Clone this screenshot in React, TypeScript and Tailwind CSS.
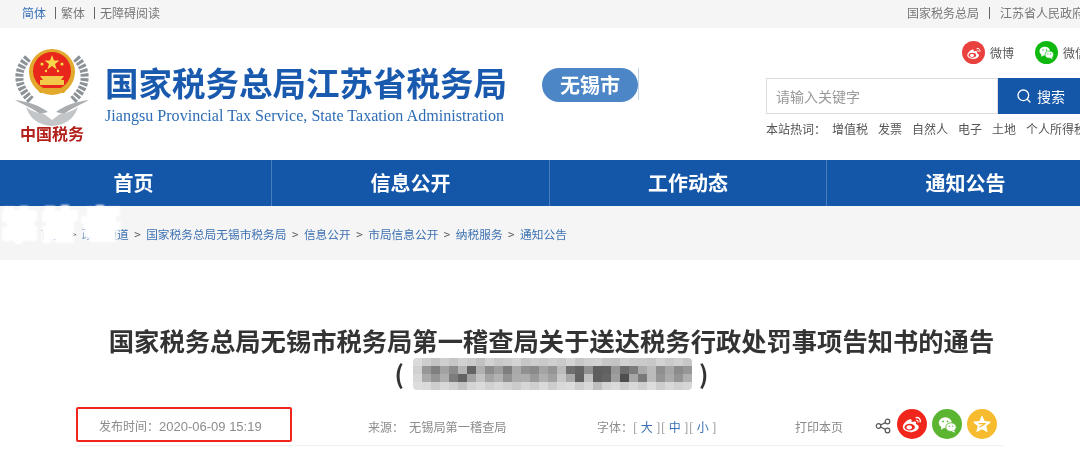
import React from 'react';
import { Search } from 'lucide-react';

const CJK = "font-['Noto_Sans_CJK_SC','Liberation_Sans',sans-serif]";

const NAV_ITEMS = ['首页', '信息公开', '工作动态', '通知公告'];
const CRUMBS = ['国家税务总局无锡市税务局', '信息公开', '市局信息公开', '纳税服务', '通知公告'];
const HOT_WORDS = ['增值税', '发票', '自然人', '电子', '土地', '个人所得税'];

// mosaic that covers the redacted part of the title
const MOSAIC = [
  ['#f2f2f2', '#e4e4e4', '#d9d9d9', '#e6e6e6', '#dcdcdc', '#e8e8e8', '#e2e2e2', '#d6d6d6', '#e9e9e9', '#dedede', '#e4e4e4', '#ececec', '#dcdcdc', '#e4e4e4', '#dfdfdf', '#e6e6e6', '#e0e0e0', '#ebebeb', '#dddddd', '#e5e5e5', '#e8e8e8', '#dcdcdc', '#d9d9d9', '#e8e8e8', '#e3e3e3', '#e0e0e0', '#dddddd', '#eaeaea', '#e0e0e0', '#e8e8e8', '#dddddd'],
  ['#e8e8e8', '#a8a8a8', '#8e8e8e', '#b4b4b4', '#9a9a9a', '#c8c8c8', '#6e6e6e', '#c4c4c4', '#9c9c9c', '#b0b0b0', '#8c8c8c', '#bcbcbc', '#a0a0a0', '#999999', '#b6b6b6', '#a6a6a6', '#d0d0d0', '#7a7a7a', '#6f6f6f', '#a0a0a0', '#686868', '#6c6c6c', '#a8a8a8', '#787878', '#8a8a8a', '#bcbcbc', '#d0d0d0', '#9e9e9e', '#b8b8b8', '#9a9a9a', '#a8a8a8'],
  ['#f0f0f0', '#bdbdbd', '#a6a6a6', '#c0c0c0', '#8a8a8a', '#6e6e6e', '#b4b4b4', '#d8d8d8', '#b6b6b6', '#c6c6c6', '#a2a2a2', '#bfbfbf', '#c0c0c0', '#aaaaaa', '#c4c4c4', '#b2b2b2', '#dedede', '#bcbcbc', '#6c6c6c', '#d6d6d6', '#686868', '#707070', '#b0b0b0', '#575757', '#b8b8b8', '#868686', '#cfcfcf', '#a6a6a6', '#bebebe', '#a4a4a4', '#c4c4c4'],
  ['#f6f6f6', '#f2f2f2', '#e4e4e4', '#f0f0f0', '#e6e6e6', '#d8d8d8', '#ececec', '#f2f2f2', '#e8e8e8', '#f0f0f0', '#e8e8e8', '#e2e2e2', '#eeeeee', '#e6e6e6', '#f2f2f2', '#e4e4e4', '#f0f0f0', '#f4f4f4', '#e4e4e4', '#f0f0f0', '#d4d4d4', '#ececec', '#f2f2f2', '#e4e4e4', '#f0f0f0', '#e6e6e6', '#f4f4f4', '#e4e4e4', '#f0f0f0', '#e8e8e8', '#eeeeee'],
];

const Emblem = () => (
  <svg width="76" height="78" viewBox="0 6 76 78" fill="none">
    {/* wreath */}
    <path d="M14 16 C2 28 2 44 17 58" stroke="#8d9296" strokeWidth="8" strokeDasharray="3 1.5" />
    <path d="M62 16 C74 28 74 44 59 58" stroke="#8d9296" strokeWidth="8" strokeDasharray="3 1.5" />
    {/* wings */}
    <path d="M1 58 C16 60 26 64 34 70 L26 72 C18 66 8 62 1 58Z" fill="#a9adb0" />
    <path d="M75 58 C60 60 50 64 42 70 L50 72 C58 66 68 62 75 58Z" fill="#a9adb0" />
    <path d="M12 65 C24 75 52 75 64 65 C60 78 50 83 38 84 C26 83 16 78 12 65Z" fill="#c3c6c8" />
    <path d="M30 72 L38 78 L46 72 L38 70Z" fill="#ffffff" />
    {/* shield */}
    <circle cx="38" cy="30" r="23" fill="#e2a92c" />
    <circle cx="38" cy="29" r="19" fill="#e8261c" />
    <path d="M38 13 L40 18.5 L45.5 18.5 L41 22 L42.7 27.5 L38 24 L33.3 27.5 L35 22 L30.5 18.5 L36 18.5Z" fill="#f7d84a" />
    <circle cx="28" cy="22" r="1.6" fill="#f7d84a" />
    <circle cx="48" cy="22" r="1.6" fill="#f7d84a" />
    <circle cx="32" cy="29" r="1.2" fill="#f7d84a" />
    <circle cx="44" cy="29" r="1.2" fill="#f7d84a" />
    <path d="M26 34 H50 L47 38 H50 V43 H26 V38 H29Z" fill="#f3c94a" />
    <path d="M22 46 H54 L50 51 H26Z" fill="#e2a92c" />
  </svg>
);

const WeiboGlyph = ({ size }: { size: number }) => (
  <svg width={size} height={size} viewBox="0 0 24 24" fill="#fff">
    <path d="M10.2 20.5c-4.4 0-8.2-2.1-8.2-5.3 0-1.7 1.1-3.6 2.9-5.4 2.5-2.5 5.3-3.6 6.4-2.5.5.5.5 1.3.2 2.3-.2.5.4.2.4.2 2-.8 3.8-.9 4.4 0 .3.5.3 1.1 0 1.9-.1.3 0 .4.3.5 1.3.4 2.8 1.3 2.8 3 0 2.9-4.1 5.8-9.8 5.8z" />
    <ellipse cx="9.5" cy="15.5" rx="5.6" ry="3.7" fill="currentColor" />
    <ellipse cx="9" cy="15.6" rx="3" ry="2.3" />
    <path d="M16.5 5c2.900-.6 5.200 2 4.400 4.700" stroke="#fff" strokeWidth="1.5" fill="none" strokeLinecap="round" />
    <path d="M16.800 8c1.300-.3 2.100.9 1.800 1.900" stroke="#fff" strokeWidth="1.2" fill="none" strokeLinecap="round" />
  </svg>
);

const WechatGlyph = ({ size }: { size: number }) => (
  <svg width={size} height={size} viewBox="0 0 24 24" fill="#fff">
    <ellipse cx="9.5" cy="10" rx="7.5" ry="6.2" />
    <path d="M5 14.5 L4.5 18 L8.5 15.8Z" />
    <ellipse cx="16" cy="15" rx="6" ry="5" stroke="currentColor" strokeWidth="1" />
    <path d="M19.5 18.5 L20.5 21.5 L17 19.8Z" />
    <circle cx="7" cy="8.5" r="1" fill="currentColor" />
    <circle cx="12" cy="8.5" r="1" fill="currentColor" />
    <circle cx="14" cy="14" r=".8" fill="currentColor" />
    <circle cx="18" cy="14" r=".8" fill="currentColor" />
  </svg>
);

const App: React.FC = () => {
  return (
    <div className={`w-[1080px] h-[456px] overflow-hidden bg-white relative blur-[0.35px] ${CJK}`}>
      {/* top bar */}
      <div className="h-[28px] bg-[#f5f5f5] flex items-center justify-between pb-[3px] pl-[22px] text-[12px] text-[#777]">
        <div className="flex items-center">
          <span className="text-[#3a70b5]">简体</span>
          <span className="w-px h-[12px] bg-[#666] ml-[9px] mr-[5px]" />
          <span>繁体</span>
          <span className="w-px h-[12px] bg-[#666] ml-[9px] mr-[5px]" />
          <span>无障碍阅读</span>
        </div>
        <div className="flex items-center w-[173px] shrink-0 overflow-hidden whitespace-nowrap">
          <span>国家税务总局</span>
          <span className="w-px h-[12px] bg-[#666] mx-[10px] shrink-0" />
          <span>江苏省人民政府</span>
        </div>
      </div>

      {/* header */}
      <div className="h-[132px] flex">
        <div className="pl-[14px] pt-[20px] w-[105px] shrink-0 flex flex-col">
          <Emblem />
          <div className="-mt-[2px] ml-[6px] text-[16px] leading-[18px] font-bold text-[#b3211c] whitespace-nowrap">
            中国税务
          </div>
        </div>
        <div className="pt-[33px]">
          <div className="-mt-[2px] text-[33.5px] leading-[46px] font-bold text-[#1a5aae] whitespace-nowrap">
            国家税务总局江苏省税务局
          </div>
          <div className="mt-[1px] text-[16.1px] leading-[20px] text-[#2e6db6] whitespace-nowrap font-['Liberation_Serif',serif]">
            Jiangsu Provincial Tax Service, State Taxation Administration
          </div>
        </div>
        <div className="pt-[40px] ml-[35px] flex items-start">
          <div className="w-[96px] h-[34px] rounded-full bg-[#4c86c6] text-white text-[20px] leading-[34px] font-bold text-center">
            无锡市
          </div>
          <div className="w-px h-[32px] bg-[#c5d5ea]" />
        </div>
        <div className="ml-auto w-[314px] shrink-0 flex flex-col">
          <div className="flex items-center pt-[13px] pl-[196px] whitespace-nowrap text-[12px] text-[#555]">
            <span className="w-[23px] h-[23px] rounded-full bg-[#e8413e] text-[#e8413e] flex items-center justify-center shrink-0">
              <WeiboGlyph size={16} />
            </span>
            <span className="ml-[5px]">微博</span>
            <span className="ml-[21px] w-[23px] h-[23px] rounded-full bg-[#0fb90f] text-[#0fb90f] flex items-center justify-center shrink-0">
              <WechatGlyph size={17} />
            </span>
            <span className="ml-[5px]">微信</span>
          </div>
          <div className="mt-[14px] h-[36px] flex">
            <div className="w-[232px] h-[36px] border border-[#dcdcdc] bg-white pl-[9px] text-[14px] leading-[34px] text-[#999]">
              请输入关键字
            </div>
            <div className="flex-1 h-[36px] bg-[#1456a8] flex items-center pl-[18px] text-white text-[14px]">
              <Search size={16} strokeWidth={2} />
              <span className="ml-[5px]">搜索</span>
            </div>
          </div>
          <div className="flex mt-[6px] text-[12px] text-[#555] whitespace-nowrap">
            <span className="mr-[6px]">本站热词：</span>
            {HOT_WORDS.map((w) => (
              <span key={w} className="mr-[10px]">{w}</span>
            ))}
          </div>
        </div>
      </div>

      {/* nav */}
      <div className="h-[46px] bg-[#1456a8] grid grid-cols-[272px_278px_277px_277px]">
        {NAV_ITEMS.map((item, i) => (
          <div
            key={item}
            className={`flex items-center justify-center text-white text-[20px] font-bold ${i < 3 ? 'border-r border-[#4a7dbd]' : ''} ${i === 0 ? 'pr-[4px]' : ''}`}
          >
            {item}
          </div>
        ))}
      </div>

      {/* breadcrumb */}
      <div className="h-[54px] bg-[#f5f5f5] flex items-center pl-[41px] pt-[1px] text-[11.7px] text-[#3d71b2] whitespace-nowrap">
        <span className="flex items-center">
          首页
          <span className="mx-[5.5px] text-[#555]">&gt;</span>
          政务频道
        </span>
        {CRUMBS.map((c) => (
          <span key={c} className="flex items-center">
            <span className="mx-[5.5px] text-[#555]">&gt;</span>
            {c}
          </span>
        ))}
      </div>

      {/* article head */}
      <div className="pt-[65px] pl-[23px] flex flex-col items-center">
        <h1 className="text-[25.3px] leading-[34px] font-bold text-[#333] whitespace-nowrap -mt-[2px]">
          国家税务总局无锡市税务局第一稽查局关于送达税务行政处罚事项告知书的通告
        </h1>
        <div className="flex items-center h-[34px] text-[25px] font-bold text-[#333]">
          <span className="mr-[9px]">(</span>
          <div className="flex flex-col rounded-[4px] overflow-hidden blur-[0.6px] brightness-90">
            {MOSAIC.map((row, y) => (
              <div key={y} className="flex">
                {row.map((color, x) => (
                  <div key={x} className="w-[9px] h-[8px]" style={{ backgroundColor: color }} />
                ))}
              </div>
            ))}
          </div>
          <span className="ml-[7px]">)</span>
        </div>
      </div>

      {/* meta row */}
      <div className="ml-[79px] mt-[18px] h-[37px] w-[924px] border-b border-[#f0f0f0] flex items-center text-[12px] text-[#8c8c8c] whitespace-nowrap relative">
        <div className="absolute left-[-3px] top-[-2px] w-[216px] h-[35px] border-2 border-[#f0261c] rounded-[2px]" />
        <span className="ml-[20px] w-[269px]">
          发布时间：<span className="text-[13px] font-['Liberation_Sans',sans-serif]">2020-06-09 15:19</span>
        </span>
        <span className="w-[229px]">
          来源：<span className="ml-[5px] text-[12.2px]">无锡局第一稽查局</span>
        </span>
        <span className="w-[198px]">
          字体：<span className="tracking-[0.5px]">[ <span className="text-[#3a70b5]">大</span> ][ <span className="text-[#3a70b5]">中</span> ][ <span className="text-[#3a70b5]">小</span> ]</span>
        </span>
        <span className="w-[80px]">打印本页</span>
        <div className="flex items-center mb-[6px]">
          <svg width="16" height="16" viewBox="0 0 16 16" fill="none" stroke="#555" strokeWidth="1.2" className="mt-[4px]">
            <circle cx="3.5" cy="8" r="2.3" />
            <circle cx="12.5" cy="3.5" r="2.3" />
            <circle cx="12.5" cy="12.5" r="2.3" />
            <path d="M5.6 7 L10.4 4.6 M5.6 9 L10.4 11.4" />
          </svg>
          <span className="ml-[6px] w-[30px] h-[30px] rounded-full bg-[#f0261c] text-[#f0261c] flex items-center justify-center">
            <WeiboGlyph size={22} />
          </span>
          <span className="ml-[5px] w-[30px] h-[30px] rounded-full bg-[#5cb531] text-[#5cb531] flex items-center justify-center">
            <WechatGlyph size={21} />
          </span>
          <span className="ml-[5px] w-[30px] h-[30px] rounded-full bg-[#f6bb2f] flex items-center justify-center">
            <svg width="20" height="20" viewBox="0 0 24 24" fill="#fff" stroke="#fff" strokeWidth="1.5" strokeLinejoin="round">
              <path d="M12 3 L14.7 9.2 L21.5 9.8 L16.3 14.2 L17.9 20.8 L12 17.3 L6.1 20.800 L7.7 14.2 L2.5 9.8 L9.3 9.2Z" />
              <path d="M8 11.500 H16 L9 16" stroke="#f6bb2f" strokeWidth="1.5" fill="none" />
            </svg>
          </span>
        </div>
      </div>

      {/* white smudge over the breadcrumb start */}
      <svg className="absolute left-0 top-[200px] blur-[1.2px]" width="124" height="50" viewBox="0 0 124 50" fill="#fff">
        <path d="M4 7h10v3h6V6h8v4h9v11h-3v5h3v15H22v3H14v-3H2V27h5v-5H2V11h2z" />
        <path d="M45 6h10v5h6V5h8v5h9v11h-4v22H56v-3h-5v3h-9V26h4v-4h-4V11h3z" />
        <path d="M87 7h9V5h8v2h16v9h-4v6h5v8h-5v12H89v-4h-5V24h-3v-8h6z" />
      </svg>
    </div>
  );
};

export default App;
